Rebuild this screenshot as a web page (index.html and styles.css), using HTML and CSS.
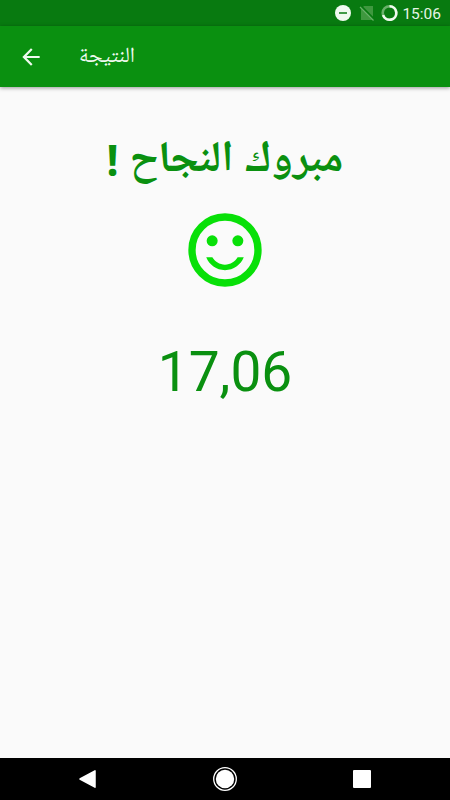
FILE: index.html
```html
<!DOCTYPE html>
<html lang="ar">
  <head>
    <meta charset="utf-8">
    <title>النتيجة</title>
    <link rel="stylesheet" href="styles.css">
  </head>
  <body>
    <div class="status-bar">
      <svg class="status-icons" width="64" height="18" viewBox="0 0 64 18">
        <circle cx="8" cy="9" r="8" fill="#f0faf0"/>
        <path d="M4 9h8" stroke="#087a10" stroke-width="1.500"/>
        <path d="M29 2h9v14H26V5z" fill="#3f983f"/>
        <path d="M25 1.500l14 14" stroke="#087a10" stroke-width="2.500"/>
        <path d="M25 3l13.500 13.500" stroke="#69b169" stroke-width="1.200"/>
        <circle cx="54.500" cy="9" r="6.800" fill="none" stroke="#69b169" stroke-width="2.600"/>
        <path d="M54.500 2.200a6.800 6.800 0 1 1-6.400 9" fill="none" stroke="#f0faf0" stroke-width="2.600"/>
      </svg>
      <span class="clock">15:06</span>
    </div>

    <div class="toolbar">
      <svg class="back" width="26" height="26" viewBox="0 0 24 24">
        <path d="M20 11H7.830l5.590-5.590L12 4l-8 8 8 8 1.410-1.410L7.830 13H20v-2z" fill="#f0faf0"/>
      </svg>
      <span class="title" dir="rtl">النتيجة</span>
    </div>

    <div class="content">
      <h1 class="message" dir="rtl">مبروك النجاح <span class="mark">!</span></h1>
      <svg class="face" width="88" height="88" viewBox="0 0 24 24">
        <circle cx="12" cy="12" r="9" fill="none" stroke="#08e008" stroke-width="2"/>
        <circle cx="8.500" cy="9.500" r="1.500" fill="#08e008"/>
        <circle cx="15.500" cy="9.500" r="1.500" fill="#08e008"/>
        <path d="M12 16c-1.480 0-2.750-.810-3.450-2H6.880c.8 2.050 2.790 3.500 5.120 3.500s4.320-1.450 5.120-3.500h-1.670c-.7 1.190-1.970 2-3.450 2z" fill="#08e008"/>
      </svg>
      <div class="score">17,06</div>
    </div>

    <div class="nav-bar">
      <svg width="20" height="20" viewBox="0 0 20 20">
        <path d="M2 10L17 1.800v16.400z" fill="#fff" stroke="#fff" stroke-width="1.500" stroke-linejoin="round"/>
      </svg>
      <svg width="26" height="26" viewBox="0 0 26 26">
        <circle cx="13" cy="13" r="11.300" fill="none" stroke="#fff" stroke-width="1.300"/>
        <circle cx="13" cy="13" r="9.200" fill="#fff"/>
      </svg>
      <svg width="20" height="20" viewBox="0 0 20 20">
        <rect x="1" y="1" width="18" height="18" rx="1" fill="#fff"/>
      </svg>
    </div>
  </body>
</html>
```
FILE: styles.css
```css
body {
  margin: 0;
  height: 800px;
  display: flex;
  flex-direction: column;
  background-color: #fafafa;
  font-family: Roboto, "Noto Naskh Arabic", "Noto Sans Arabic", "DejaVu Sans", sans-serif;
  overflow: hidden;
}

/* Top bars */
.status-bar {
  display: flex;
  align-items: center;
  justify-content: flex-end;
  gap: 3px;
  height: 26px;
  padding-right: 9px;
  background-color: #087a10;
  color: #e6f5e6;
}

.clock {
  font-size: 15.500px;
  line-height: 26px;
  padding-top: 1px;
}

.toolbar {
  display: flex;
  align-items: center;
  height: 61px;
  padding-left: 18px;
  background-color: #0a9010;
  color: #f0faf0;
  box-shadow: 0 1px 4px rgba(0, 0, 0, 0.4);
}

.title {
  margin-left: 35px;
  padding-bottom: 3px;
  font-size: 21.700px;
  line-height: 30px;
}

/* Result */
.content {
  flex: 1;
  display: flex;
  flex-direction: column;
  align-items: center;
  color: #0a9010;
}

.message {
  height: 60px;
  margin: 40px 0 0;
  font-size: 43.500px;
  font-weight: bold;
  line-height: 60px;
  white-space: nowrap;
}

.mark {
  font-family: "Noto Sans", sans-serif;
  font-size: 43px;
  line-height: 1;
  vertical-align: -5px;
}

.face {
  margin-top: 19px;
}

.score {
  margin-top: 46px;
  font-size: 55px;
  line-height: 64px;
}

/* Bottom navigation */
.nav-bar {
  display: flex;
  align-items: center;
  justify-content: space-between;
  height: 42px;
  padding: 0 78px;
  background-color: #000;
}
```
